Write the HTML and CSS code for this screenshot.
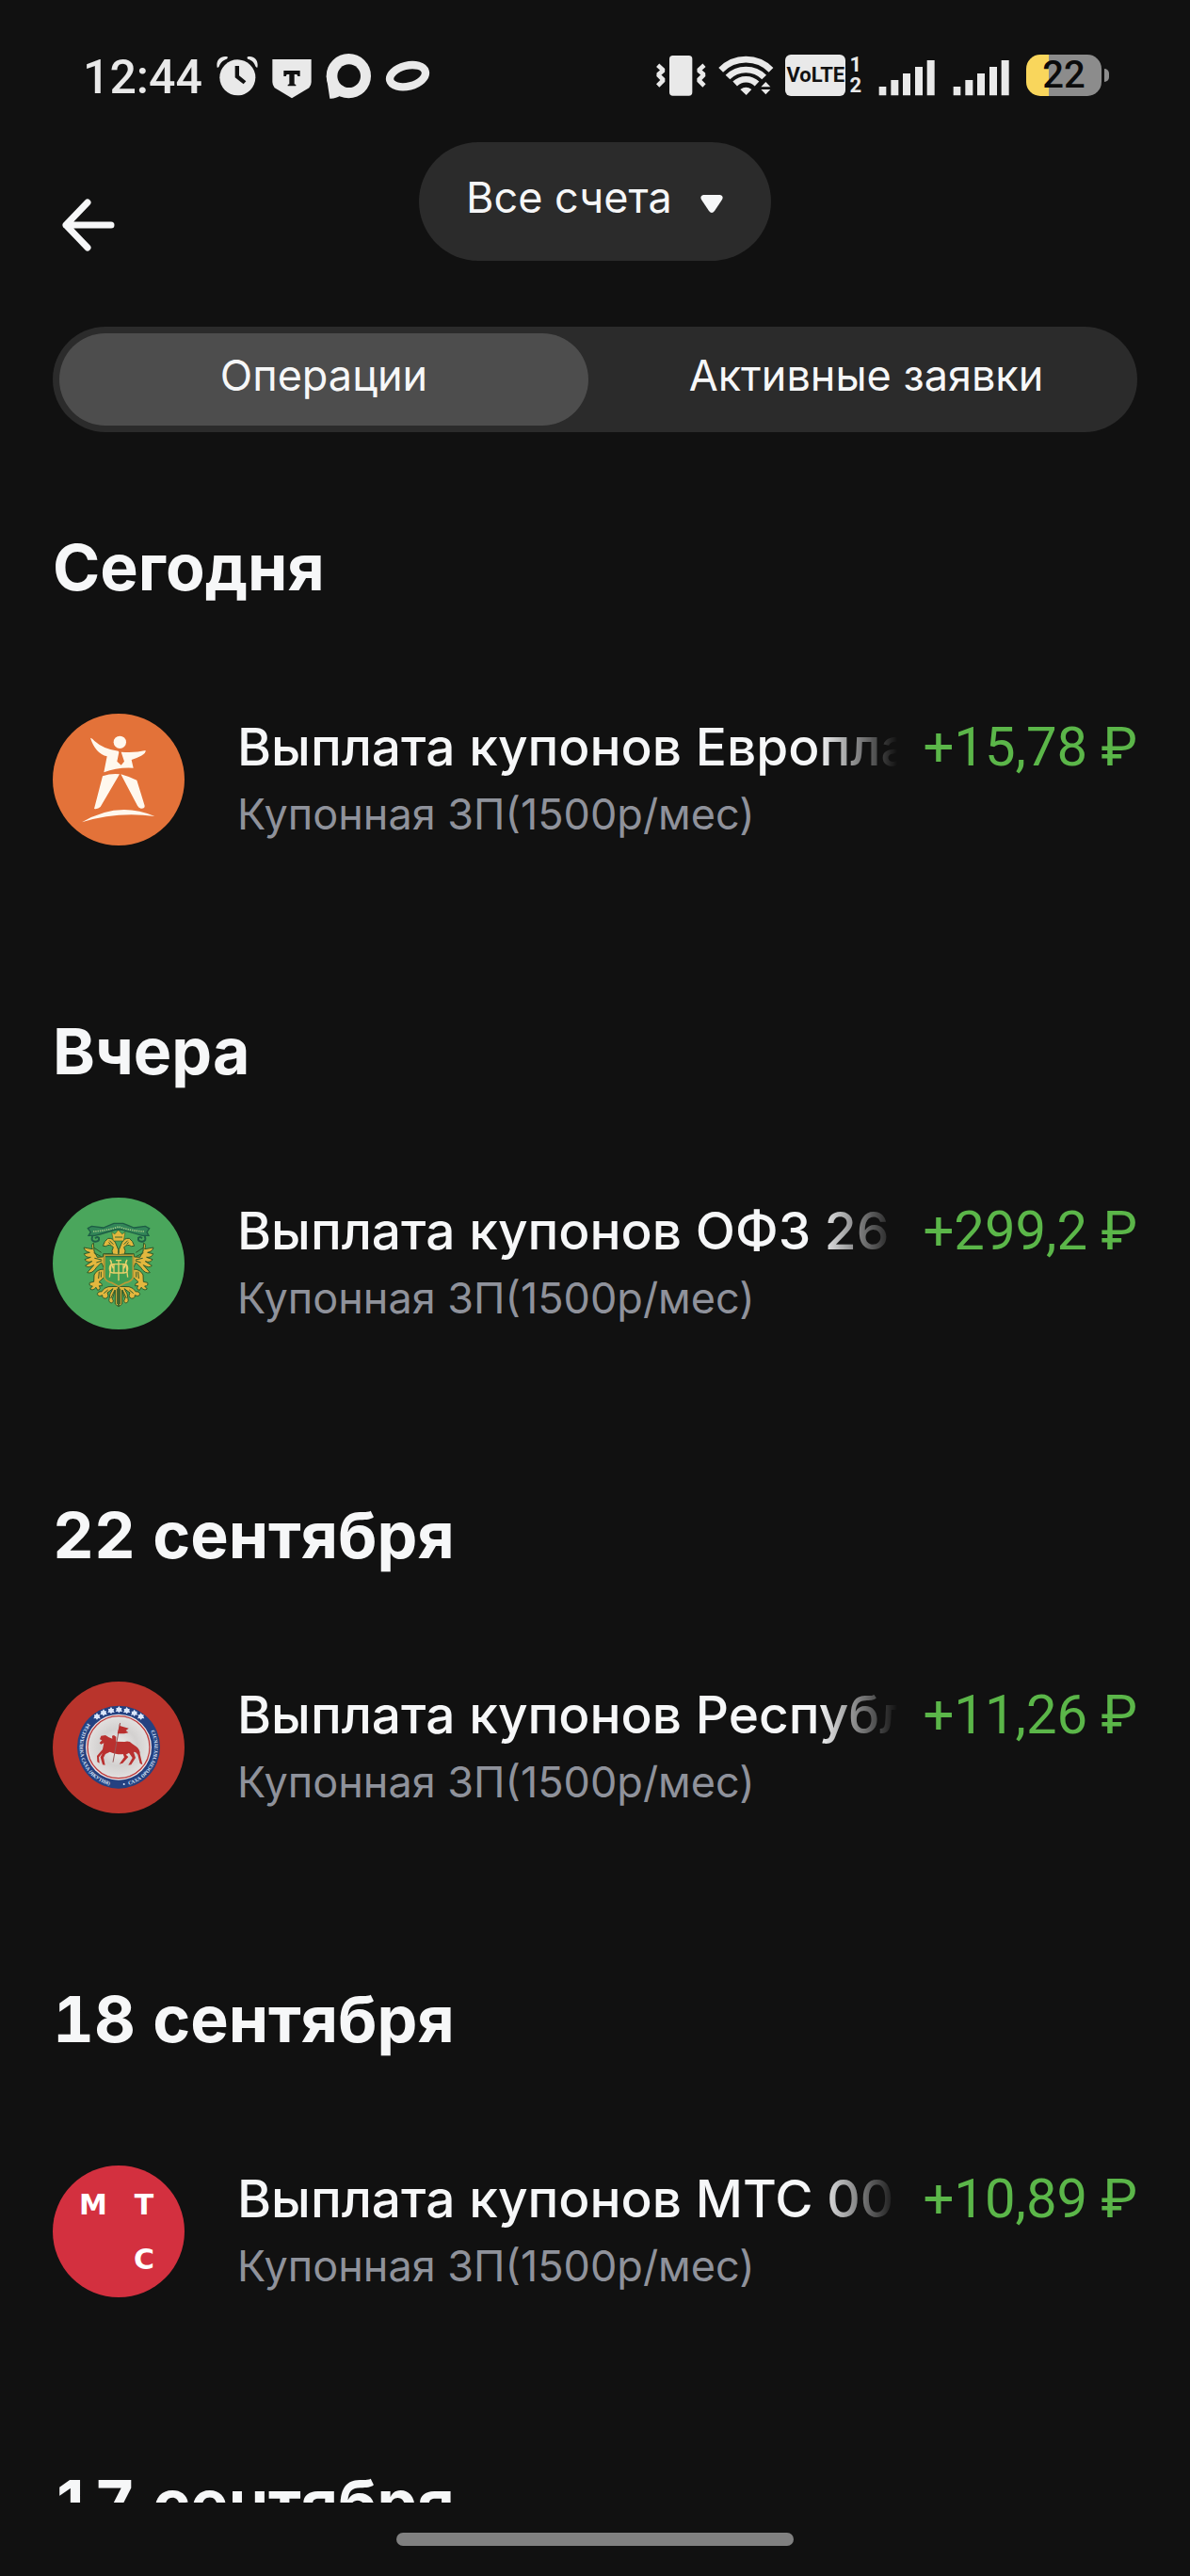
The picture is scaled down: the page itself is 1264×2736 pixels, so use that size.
FILE: index.html
```html
<!DOCTYPE html>
<html lang="ru">
<head>
    <meta charset="UTF-8">
    <meta name="viewport" content="width=device-width, initial-scale=1">
    <title>Операции</title>
    <link rel="stylesheet" href="styles.css">
</head>
<body>

    <div class="status">
        <div class="status-left">
            <span class="clock">12:44</span>
            <svg class="alarm" viewBox="511 45 132 150" width="44" height="50">
                <circle cx="578" cy="127" r="57"/>
                <path d="M513 95C508 72 524 56 546 61C547 66 545 68 541 69C528 74 523 82 519 92C517 95 515 96 513 95ZM641 95C646 72 630 56 610 61C607 65 610 68 614 69C627 74 632 82 635 91C637 95 639 96 641 95Z"/>
                <path class="cut" d="M570 90H583V121L605 139L597 148L570 127Z"/>
            </svg>
            <svg class="shield" viewBox="696 45 126 150" width="42" height="50">
                <path d="M697 69H821V141Q821 151 814 160L759 193L704 160Q697 151 697 141Z"/>
                <path class="cut" d="M733 105H785V123H778L775 117H767V148L772 150V154H746V150L751 148V117H743L740 123H733Z"/>
            </svg>
            <svg class="chat" viewBox="866 45 144 150" width="48" height="50">
                <path d="M868 122L879 194Q898 195 914 184L939 122Z"/>
                <circle cx="939" cy="122" r="71"/>
                <circle class="cut" cx="940" cy="122" r="37"/>
                <path d="M904 168L918 152L926 158L930 170Z"/>
            </svg>
            <svg class="ring" viewBox="1047 45 144 150" width="48" height="50">
                <ellipse cx="1119" cy="122" rx="58" ry="33" transform="rotate(-14 1119 122)" fill="none" stroke="#e9e9e9" stroke-width="25"/>
            </svg>
        </div>
        <div class="status-right">
            <svg viewBox="49 45 165 150" width="55" height="50">
                <rect x="94" y="57" width="73" height="128" rx="11"/>
                <path d="M57 88L75 104L58 118L75 135L57 153M205 88L187 104L204 118L187 135L205 153" fill="none" stroke="#e9e9e9" stroke-width="14" stroke-linejoin="bevel"/>
            </svg>
            <svg viewBox="250 45 177 150" width="59" height="50">
                <path d="M258 103A112 112 0 0 1 418 103M280 126A82 82 0 0 1 396 126M303 147A50 50 0 0 1 373 147" fill="none" stroke="#e9e9e9" stroke-width="20"/>
                <path d="M320 165Q338 152 356 165L339 183ZM386 157L401 141L416 157ZM386 165L401 181L416 165Z"/>
            </svg>
            <span class="volte">
                <b class="volte-badge">VoLTE</b>
                <span class="sims"><b>1</b><b>2</b></span>
            </span>
            <span class="signals">
                <svg viewBox="760 45 180 150" width="60" height="50">
                    <path d="M762 156h23v28h-23zM800 135h24v49h-24zM838 114h24v70h-24zM877 93h24v91h-24zM915 72h24v112h-24z"/>
                </svg>
                <svg viewBox="760 45 180 150" width="60" height="50">
                    <path d="M762 156h23v28h-23zM800 135h24v49h-24zM838 114h24v70h-24zM877 93h24v91h-24zM915 72h24v112h-24z"/>
                </svg>
            </span>
            <span class="battery"><span class="charge">22</span><i class="battery-cap"></i></span>
        </div>
    </div>

    <header class="header">
        <button class="back" aria-label="Назад">
            <svg viewBox="0 0 56 56" width="56" height="56">
                <path d="M27 4L4 28L27 52M4 28H52" fill="none" stroke="#f6f7f8" stroke-width="7" stroke-linecap="round" stroke-linejoin="round"/>
            </svg>
        </button>
        <div class="account">
            <select class="account-select" aria-label="Счёт">
                <option>Все счета</option>
            </select>
            <svg class="account-arrow" viewBox="0 0 24 20" width="24" height="20">
                <path d="M3 0H21Q25 1 23 5L15 17Q12 21 9 17L1 5Q-1 1 3 0Z"/>
            </svg>
        </div>
    </header>

    <div class="tabs" role="tablist">
        <button class="tab active" role="tab" aria-selected="true">Операции</button>
        <button class="tab" role="tab" aria-selected="false">Активные заявки</button>
    </div>

    <main class="list">
        <section class="day">
            <h2>Сегодня</h2>
            <div class="operation">
                <svg class="avatar orange" viewBox="48 54 420 420">
                    <g fill="#fff8ee">
                        <circle cx="262" cy="145" r="20"/>
                        <path d="M168 131Q174 132 181 141Q211 168 257 173L259 177L253 206L266 218L276 206L266 176Q309 180 344 171Q345 180 330 188Q312 197 299 201L305 227Q254 224 211 241L221 190Q184 181 168 131Z"/>
                        <path d="M207 253Q234 244 261 247L200 351Q192 359 180 357ZM265 247Q290 254 316 266L341 347Q342 357 329 356Q322 354 318 347Z"/>
                        <path d="M141 400Q257 331 373 381Q253 365 141 400Z"/>
                    </g>
                </svg>
                <div class="info">
                    <div class="title">Выплата купонов Европлан</div>
                    <div class="note">Купонная ЗП(1500р/мес)</div>
                </div>
                <div class="amount">+15,78 ₽</div>
            </div>
        </section>

        <section class="day">
            <h2>Вчера</h2>
            <div class="operation">
                <svg class="avatar green" viewBox="48 50 420 420">
                    <defs>
                        <!-- left half of the eagle, mirrored for the right one -->
                        <g id="eagle-half" stroke="#2f5a2b" stroke-width="3">
                            <path d="M257 221L244 228L209 229L208 239L190 240L180 221L178 194Q169 200 175 214L147 209Q150 222 166 225L148 229Q153 242 169 240L150 247Q157 259 173 253L152 267Q162 276 179 265L158 289Q174 294 188 272L203 257L211 274V232H257Z"/>
                            <path d="M258 232L239 230Q234 220 241 208Q229 196 218 205L208 204Q212 188 224 180Q241 178 248 194L257 216Z"/>
                            <path d="M211 278Q189 278 180 296L179 318L166 321Q162 332 175 332L167 341Q176 348 186 336L191 345Q203 343 196 331L206 331Q206 322 195 319L211 304Z"/>
                            <path d="M257 333L225 334Q212 336 203 350Q193 347 190 358Q194 367 206 361Q206 373 218 371Q229 366 222 353L240 340Q228 356 228 373Q225 384 236 386Q246 381 238 372L247 345L247 389L257 397Z"/>
                            <path d="M180 210L203 225M179 226L203 238M181 243L204 248M187 257L205 251M196 286L194 308M202 286L202 304M229 187L241 199M226 193L232 198M224 344L211 355M246 344L233 371M253 340V389" fill="none"/>
                        </g>
                    </defs>
                    <g fill="#e3b73e">
                        <use href="#eagle-half"/>
                        <use href="#eagle-half" transform="translate(516 0) scale(-1 1)"/>
                        <path d="M236 160L246 166L257 153L269 166L279 160L274 188H241Z" stroke="#37692f" stroke-width="2"/>
                        <path d="M246 176H270" stroke="#37692f" stroke-width="3"/>
                    </g>
                    <path d="M213 234H304V304Q300 317 278 322L258 333L238 322Q216 317 213 304Z" fill="#3f9d51" stroke="#b99a36" stroke-width="5"/>
                    <path d="M216 238H301" stroke="#276b43" stroke-width="4"/>
                    <path d="M231 248L235 255L229 304M285 248L281 255L287 304M231 248L241 276M285 248L275 276M249 250H267M258 250V315M241 262Q229 262 229 276Q229 290 241 290H275Q287 290 287 276Q287 262 275 262H241M243 262V290M273 262V290" fill="none" stroke="#ead06a" stroke-width="4"/>
                    <path d="M160 148L172 141L209 146Q231 137 243 132H272Q285 137 307 146L343 141L356 148L348 160L354 171L334 171Q284 158 268 152H248Q221 161 182 171L162 171L169 160Z" fill="#328658" stroke="#1e5d45" stroke-width="4"/>
                    <path d="M177 158Q216 156 258 143Q300 156 340 158" fill="none" stroke="#9cc581" stroke-width="5" stroke-dasharray="4 3"/>
                    <path d="M175 173Q168 188 182 190Q198 191 195 178Q189 173 183 180M341 173Q348 188 334 190Q318 191 321 178Q327 173 333 180" fill="none" stroke="#1f6047" stroke-width="6"/>
                </svg>
                <div class="info">
                    <div class="title">Выплата купонов ОФЗ 26</div>
                    <div class="note">Купонная ЗП(1500р/мес)</div>
                </div>
                <div class="amount">+299,2 ₽</div>
            </div>
        </section>

        <section class="day">
            <h2>22 сентября</h2>
            <div class="operation">
                <svg class="avatar red" viewBox="48 50 420 420">
                    <defs>
                        <radialGradient id="silver">
                            <stop offset="0" stop-color="#f1f0ef"/>
                            <stop offset="0.6" stop-color="#d3d1d0"/>
                            <stop offset="1" stop-color="#e2e0df"/>
                        </radialGradient>
                        <path id="ring-left" d="M160 183A124 124 0 0 0 262 383"/>
                        <path id="ring-right" d="M290 379A124 124 0 0 0 357 183"/>
                        <path id="gem" d="M0 -11L4 -5L9 -5L8 1L11 7L4 6L0 11L-4 6L-11 7L-8 1L-9 -5L-4 -5Z"/>
                    </defs>
                    <circle cx="258" cy="259" r="132" fill="#244181"/>
                    <circle cx="258" cy="259" r="105" fill="#f0e5e4"/>
                    <circle cx="258" cy="259" r="99" fill="url(#silver)" stroke="#b9393b" stroke-width="4"/>
                    <g fill="#dce6fa">
                        <use href="#gem" x="189" y="161"/>
                        <use href="#gem" x="210" y="149"/>
                        <use href="#gem" x="234" y="142"/>
                        <use href="#gem" x="259" y="139"/>
                        <use href="#gem" x="284" y="142"/>
                        <use href="#gem" x="308" y="150"/>
                        <use href="#gem" x="329" y="161"/>
                    </g>
                    <g class="ring-text">
                        <text><textPath href="#ring-left">РЕСПУБЛИКА САХА (ЯКУТИЯ)</textPath></text>
                        <text><textPath href="#ring-right">САХА ӨРӨСПҮҮБҮЛҮКЭТЭ</textPath></text>
                    </g>
                    <circle cx="275" cy="377" r="3" fill="#dce6fa"/>
                    <path d="M198 234L202 223L216 221L227 228L238 232L237 223L243 221L250 226L250 241L277 242Q292 238 301 248L314 257Q327 268 326 281L334 315L326 311L319 283Q312 272 306 275L312 293L298 315L289 316L302 293L291 277L281 283L289 290L271 310L260 313L276 291L272 281Q258 285 230 274L216 281L210 292L215 316L207 315L200 291L207 277L195 291L197 310L190 306L189 287L207 266L211 246L202 250L197 246L205 237Z" fill="#b9302f"/>
                    <path d="M263 182L240 307" stroke="#96595a" stroke-width="3"/>
                    <path d="M263 180L259 190L290 199L281 206L289 213L276 216L254 216Z" fill="#b9302f"/>
                </svg>
                <div class="info">
                    <div class="title">Выплата купонов Республика</div>
                    <div class="note">Купонная ЗП(1500р/мес)</div>
                </div>
                <div class="amount">+11,26 ₽</div>
            </div>
        </section>

        <section class="day">
            <h2>18 сентября</h2>
            <div class="operation">
                <div class="avatar mts"><b>М</b><b>Т</b><b class="last">С</b></div>
                <div class="info">
                    <div class="title">Выплата купонов МТС 002</div>
                    <div class="note">Купонная ЗП(1500р/мес)</div>
                </div>
                <div class="amount">+10,89 ₽</div>
            </div>
        </section>

        <section class="day">
            <h2>17 сентября</h2>
        </section>
    </main>

    <footer class="home"><div class="home-bar"></div></footer>

</body>
</html>
```
FILE: styles.css
```css
* {
    box-sizing: border-box;
}

body {
    margin: 0;
    height: 100vh;
    display: flex;
    flex-direction: column;
    overflow: hidden;
    background: #111;
    color: #f6f7f8;
    font-family: Inter, "Noto Sans", sans-serif;
}

button,
select {
    margin: 0;
    padding: 0;
    border: none;
    background: none;
    color: inherit;
    font: inherit;
}

svg {
    display: block;
    flex-shrink: 0;
}

/* status bar */

.status {
    display: flex;
    justify-content: space-between;
    padding: 55px 86px 0 88px;
    color: #e9e9e9;
    fill: #e9e9e9;
}

.status-left,
.status-right {
    display: flex;
    align-items: center;
    height: 50px;
}

.status-left {
    gap: 15px;
}

.status-right {
    gap: 12px;
}

.clock {
    font-family: Roboto, sans-serif;
    font-size: 50px;
    font-weight: 500;
    line-height: 54px;
    padding-top: 4px;
}

.cut {
    fill: #111;
}

.volte {
    display: flex;
    gap: 4px;
    margin-right: 6px;
    font-family: Roboto, sans-serif;
}

.volte-badge {
    width: 64px;
    height: 44px;
    border-radius: 6px;
    background: #e9e9e9;
    color: #111;
    font-size: 22px;
    line-height: 44px;
    text-align: center;
}

.sims {
    display: flex;
    flex-direction: column;
    font-size: 22px;
    line-height: 22px;
}

.signals {
    display: flex;
    gap: 19px;
}

.battery {
    display: flex;
    align-items: center;
    gap: 3px;
    margin-left: 6px;
}

.charge {
    width: 80px;
    height: 44px;
    border-radius: 15px;
    background: linear-gradient(to right, #f9d65c 24px, #8c8c8c 24px);
    color: #0b0b0b;
    font-family: Roboto, sans-serif;
    font-size: 40px;
    font-weight: 500;
    line-height: 44px;
    text-align: center;
}

.battery-cap {
    width: 5px;
    height: 14px;
    border-radius: 0 7px 7px 0;
    background: #8c8c8c;
}

/* header */

.header {
    display: grid;
    grid-template-columns: 1fr auto 1fr;
    align-items: start;
    padding: 46px 66px 70px;
}

.back {
    width: 56px;
    margin-top: 60px;
}

.account {
    position: relative;
}

.account-select {
    height: 126px;
    padding: 0 105px 10px 50px;
    border-radius: 63px;
    background: #2b2b2b;
    appearance: none;
    font-size: 45px;
}

.account-arrow {
    position: absolute;
    top: 56px;
    right: 51px;
    fill: #f6f7f8;
    pointer-events: none;
}

/* tabs */

.tabs {
    display: flex;
    gap: 14px;
    margin: 0 56px;
    padding: 7px;
    border-radius: 56px;
    background: #2b2b2b;
}

.tab {
    flex: 1;
    height: 98px;
    padding-bottom: 10px;
    border-radius: 49px;
    font-size: 45px;
}

.tab.active {
    background: #4d4d4d;
}

/* operations */

.list {
    flex: 1;
    min-height: 0;
    overflow: hidden;
    padding: 99px 56px 0;
}

.day {
    height: 514px;
}

h2 {
    margin: 0 0 112px;
    font-size: 68px;
    font-weight: 700;
    line-height: 88px;
    font-variant-numeric: tabular-nums;
}

.operation {
    display: grid;
    grid-template-columns: 140px 1fr 228px;
    align-items: start;
}

.avatar {
    width: 140px;
    height: 140px;
    border-radius: 50%;
}

.orange {
    background: #e37239;
}

.green {
    background: #4aa65c;
}

.red {
    background: #b9342c;
}

.mts {
    display: grid;
    grid-template-columns: 54px 54px;
    grid-template-rows: 58px 58px;
    place-content: center;
    place-items: center;
    background: #d3303f;
    color: #fff;
    font-family: "DejaVu Sans", sans-serif;
    font-size: 30px;
}

.mts .last {
    grid-column: 2;
}

.ring-text {
    fill: #dce6fa;
    font-family: "Liberation Serif", serif;
    font-size: 16px;
    font-weight: 700;
}

.info {
    min-width: 0;
    margin: 0 27px 0 56px;
}

.title {
    overflow: hidden;
    white-space: nowrap;
    font-size: 55px;
    font-weight: 500;
    line-height: 70px;
    -webkit-mask-image: linear-gradient(to left, transparent, #000 84px);
    mask-image: linear-gradient(to left, transparent, #000 84px);
}

.note {
    color: #8f929b;
    font-size: 45px;
    line-height: 74px;
    white-space: nowrap;
}

.amount {
    color: #5bb649;
    font-family: Roboto, sans-serif;
    font-size: 58px;
    line-height: 70px;
    text-align: right;
    white-space: nowrap;
}

/* bottom */

.home {
    display: flex;
    justify-content: center;
    height: 78px;
    padding-top: 32px;
}

.home-bar {
    width: 422px;
    height: 14px;
    border-radius: 7px;
    background: #808080;
}
```
